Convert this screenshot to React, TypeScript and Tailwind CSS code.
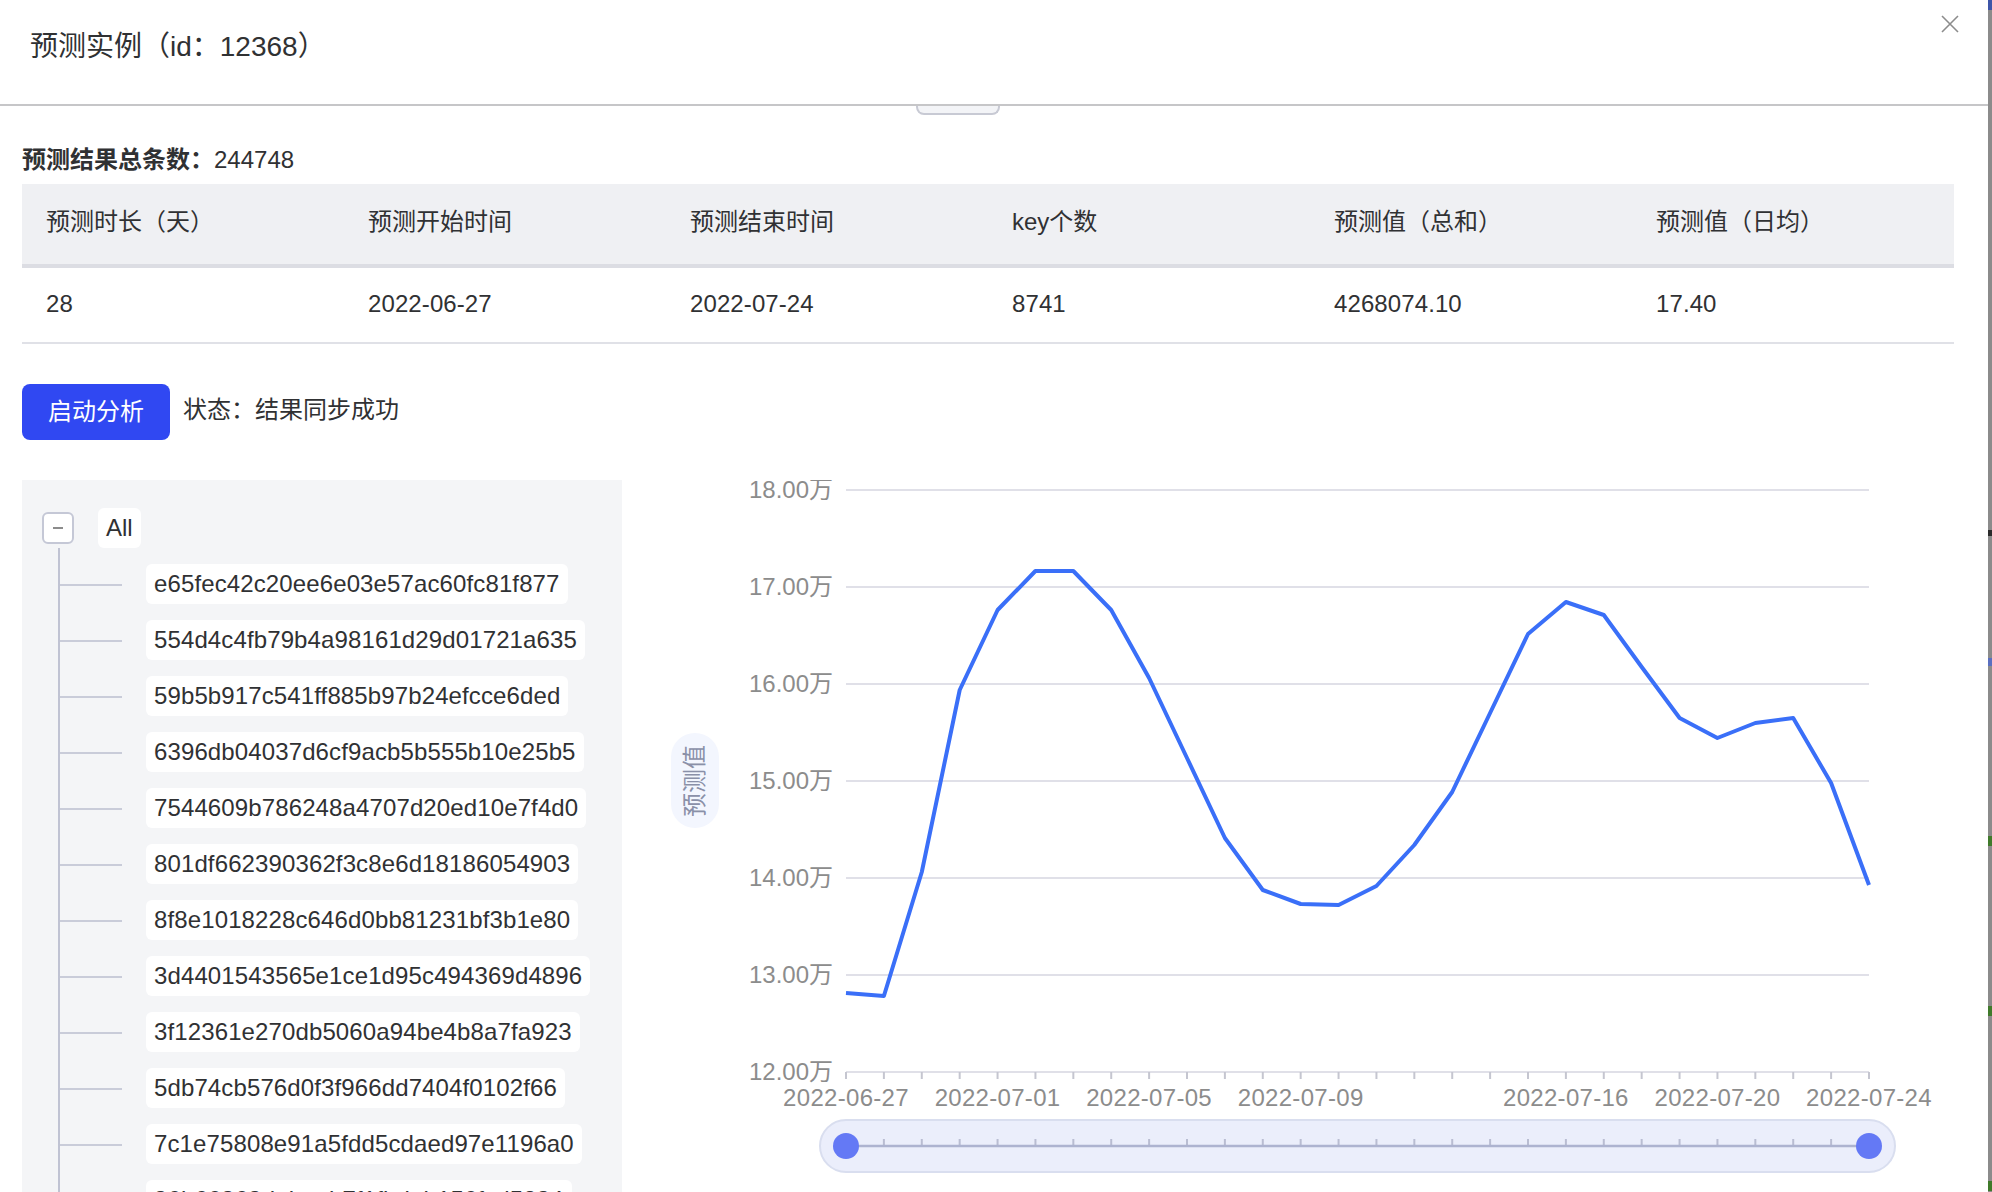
const columns = [
  { head: "预测时长（天）", value: "28" },
  { head: "预测开始时间", value: "2022-06-27" },
  { head: "预测结束时间", value: "2022-07-24" },
  { head: "key个数", value: "8741" },
  { head: "预测值（总和）", value: "4268074.10" },
  { head: "预测值（日均）", value: "17.40" },
];

const keys = [
  "e65fec42c20ee6e03e57ac60fc81f877",
  "554d4c4fb79b4a98161d29d01721a635",
  "59b5b917c541ff885b97b24efcce6ded",
  "6396db04037d6cf9acb5b555b10e25b5",
  "7544609b786248a4707d20ed10e7f4d0",
  "801df662390362f3c8e6d18186054903",
  "8f8e1018228c646d0bb81231bf3b1e80",
  "3d4401543565e1ce1d95c494369d4896",
  "3f12361e270db5060a94be4b8a7fa923",
  "5db74cb576d0f3f966dd7404f0102f66",
  "7c1e75808e91a5fdd5cdaed97e1196a0",
  "36b66363debeab7f1fbdeb156fcd5834",
];

const yAxis = [
  { label: "18.00万", y: 490 },
  { label: "17.00万", y: 587 },
  { label: "16.00万", y: 684 },
  { label: "15.00万", y: 781 },
  { label: "14.00万", y: 878 },
  { label: "13.00万", y: 975 },
  { label: "12.00万", y: 1072 },
];

const xLabels = [
  { label: "2022-06-27", i: 0 },
  { label: "2022-07-01", i: 4 },
  { label: "2022-07-05", i: 8 },
  { label: "2022-07-09", i: 12 },
  { label: "2022-07-16", i: 19 },
  { label: "2022-07-20", i: 23 },
  { label: "2022-07-24", i: 27 },
];

const values = [
  993, 996, 872, 690, 610, 571, 571, 610, 678, 758, 838, 890, 904, 905, 886, 845, 792, 713, 634, 602, 615, 667, 718,
  738, 723, 718, 783, 885,
];

const left = 846;
const right = 1869;
const step = (right - left) / 27;
const xAt = (i: number) => left + i * step;
const points = values.map((y, i) => `${xAt(i).toFixed(1)},${y}`).join(" ");
const fontStack = "'Liberation Sans','Noto Sans CJK SC',sans-serif";

function Chart() {
  return (
    <svg width={1328} height={712} viewBox="660 480 1328 712" className="shrink-0" fontFamily={fontStack}>
      <rect x={671} y={733} width={48} height={95} rx={24} fill="#f3f6fe" />
      <text
        x={694}
        y={781}
        transform="rotate(-90 694 781)"
        textAnchor="middle"
        dominantBaseline="central"
        fontSize={24}
        fill="#8a90a8"
      >
        预测值
      </text>

      {yAxis.map((t) => (
        <g key={t.label}>
          <line x1={left} x2={right} y1={t.y} y2={t.y} stroke="#e0e0e8" strokeWidth={2} />
          <text x={833} y={t.y + 8} textAnchor="end" fontSize={24} fill="#8c8c8c">
            {t.label}
          </text>
        </g>
      ))}

      {values.map((_, i) => (
        <line key={i} x1={xAt(i)} x2={xAt(i)} y1={1072} y2={1079} stroke="#c5c6d0" strokeWidth={2} />
      ))}
      {xLabels.map((t) => (
        <text key={t.label} x={xAt(t.i)} y={1106} textAnchor="middle" fontSize={24} letterSpacing={0.3} fill="#8c8c8c">
          {t.label}
        </text>
      ))}

      <polyline points={points} fill="none" stroke="#3a6ff8" strokeWidth={4} strokeLinejoin="round" />

      <rect x={820} y={1120} width={1075} height={52} rx={26} fill="#ebeefb" stroke="#d9deef" strokeWidth={2} />
      {values.map((_, i) => (
        <line key={i} x1={xAt(i)} x2={xAt(i)} y1={1139} y2={1146} stroke="#b9bdd2" strokeWidth={2} />
      ))}
      <line x1={left} x2={right} y1={1146} y2={1146} stroke="#adb3d0" strokeWidth={2.4} />
      <circle cx={left} cy={1146} r={13} fill="#6479f5" />
      <circle cx={right} cy={1146} r={13} fill="#6479f5" />
    </svg>
  );
}

function KeyTree() {
  return (
    <div className="w-[600px] h-[712px] shrink-0 overflow-hidden bg-[#f4f5f7] pt-[28px] pl-[20px]">
      <div className="flex items-center gap-[24px]">
        <div className="w-[32px] h-[32px] flex items-center justify-center rounded-[6px] border-2 border-[#c5c8d6] bg-white">
          <div className="w-[10px] h-[2px] bg-[#8c8c8c]" />
        </div>
        <div className="h-[40px] px-[8px] flex items-center rounded-[6px] bg-white">All</div>
      </div>
      <div className="ml-[16px] pt-[16px] flex flex-col gap-[16px] border-l-2 border-[#c0c3d3]">
        {keys.map((k) => (
          <div key={k} className="flex items-center">
            <div className="w-[62px] h-[2px] bg-[#c9ccd9] translate-y-[1px]" />
            <div className="ml-[24px] h-[40px] px-[8px] flex items-center rounded-[6px] bg-white whitespace-nowrap tracking-[0.12px]">
              {k}
            </div>
          </div>
        ))}
      </div>
    </div>
  );
}

export default function App() {
  return (
    <div className="w-[1992px] h-[1192px] flex overflow-hidden bg-white text-[24px] leading-[36px] text-[#303133] font-['Liberation_Sans','Noto_Sans_CJK_SC',sans-serif]">
      <div className="w-[1988px] h-[1192px] shrink-0 flex flex-col">
        <div className="h-[106px] shrink-0 flex justify-between items-start border-b-2 border-[#c6c6c8]">
          <h1 className="ml-[30px] mt-[27px] text-[28px] leading-[40px]">预测实例（id：12368）</h1>
          <svg width={20} height={20} viewBox="0 0 20 20" className="mt-[14px] mr-[28px]">
            <path d="M2 2 L18 18 M18 2 L2 18" stroke="#8c8c8c" strokeWidth={1.6} fill="none" />
          </svg>
        </div>
        <div className="ml-[916px] w-[84px] h-[9px] shrink-0 rounded-b-[8px] border-2 border-t-0 border-[#c8cad4] bg-[#f3f4f7]" />

        <div className="px-[22px] flex flex-col flex-1 min-h-0">
          <p className="mt-[27px] h-[36px]">
            <span className="font-semibold">预测结果总条数：</span>244748
          </p>
          <div className="mt-[6px] w-[1932px] grid grid-cols-6">
            {columns.map((c) => (
              <div key={c.head} className="h-[84px] pl-[24px] pt-[20px] bg-[#eff0f3] border-b-4 border-[#dcdde3]">
                {c.head}
              </div>
            ))}
            {columns.map((c) => (
              <div key={c.head} className="h-[76px] pl-[24px] pt-[18px] border-b-2 border-[#e0e1e7] tracking-[0.1px]">
                {c.value}
              </div>
            ))}
          </div>

          <div className="mt-[40px] flex items-center gap-[13px]">
            <button className="w-[148px] h-[56px] rounded-[8px] bg-[#3048f2] text-white">启动分析</button>
            <span className="-mt-[5px]">状态：结果同步成功</span>
          </div>

          <div className="mt-[40px] flex">
            <KeyTree />
            <div className="ml-[38px]">
              <Chart />
            </div>
          </div>
        </div>
      </div>
      <div className="w-[4px] h-[1192px] shrink-0 flex flex-col bg-[#8b8b8b]">
        <div className="h-[10px] bg-[#3e55a8]" />
        <div className="mt-[520px] h-[6px] bg-[#2a2a2a]" />
        <div className="mt-[122px] h-[8px] bg-[#5a6fc0]" />
        <div className="mt-[170px] h-[10px] bg-[#3f7a2a]" />
        <div className="mt-[160px] h-[10px] bg-[#3f7a2a]" />
        <div className="mt-[165px] h-[10px] bg-[#3f7a2a]" />
      </div>
    </div>
  );
}
